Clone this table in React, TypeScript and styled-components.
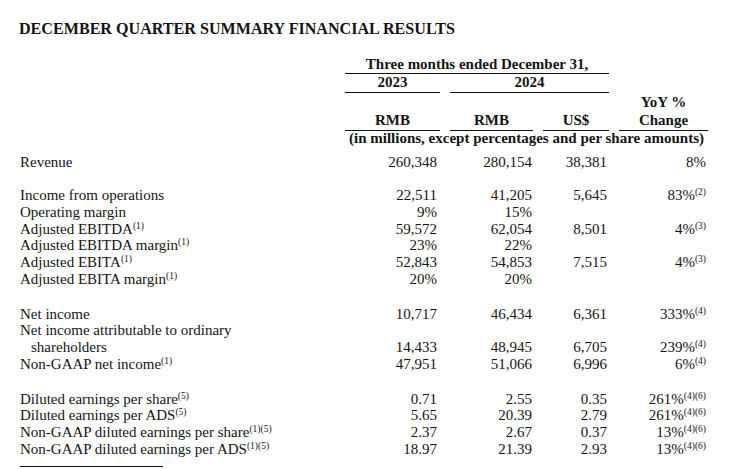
import React from "react";
import styled, { createGlobalStyle } from "styled-components";

const GlobalStyle = createGlobalStyle`
  body {
    margin: 0;
    background: #fff;
    color: #141414;
    font-family: "Liberation Serif", "Times New Roman", serif;
  }
`;

const Page = styled.div`
  padding: 19px 0 0 20px;
  width: 733px;
  height: 469px;
  box-sizing: border-box;
  overflow: hidden;
`;

const Title = styled.h1`
  margin: 0 0 17px -1px;
  font-size: 16.1px;
  line-height: 20px;
  font-weight: bold;
`;

const Row = styled.div<{ $header?: boolean }>`
  display: grid;
  grid-template-columns: 315px 95px 83px 66px 89px;
  column-gap: 10px;
  font-size: 15px;
  line-height: 16.67px;
  font-weight: ${({ $header }) => ($header ? "bold" : "normal")};
  align-items: end;
`;

const Head = styled.div<{ $span?: number; $start?: number; $rule?: boolean; $lh?: number; $pad?: number }>`
  grid-column: ${({ $start, $span }) => `${$start ?? 2} / span ${$span ?? 1}`};
  text-align: center;
  line-height: ${({ $lh }) => $lh ?? 17}px;
  padding-bottom: ${({ $pad }) => $pad ?? 0}px;
  border-bottom: ${({ $rule }) => ($rule ? "1px solid #111" : "none")};
  white-space: nowrap;
`;

const Label = styled.div<{ $indent?: boolean }>`
  padding-left: ${({ $indent }) => ($indent ? 11 : 0)}px;
  white-space: nowrap;
`;

const Value = styled.div<{ $pad: number }>`
  text-align: right;
  padding-right: ${({ $pad }) => $pad}px;
  white-space: nowrap;
`;

const Note = styled.sup`
  font-size: 9.5px;
  line-height: 0;
  vertical-align: 5px;
`;

const Spacer = styled.div<{ $h: number }>`
  height: ${({ $h }) => $h}px;
`;

const FootRule = styled.div`
  width: 143px;
  border-top: 1px solid #111;
  margin-top: 9px;
`;

type Line = {
  label: React.ReactNode;
  values?: React.ReactNode[];
  indent?: boolean;
};

const notes = (n: string) => <Note>{n}</Note>;
const pads = [3, 1, 2, 2];

const groups: Line[][] = [
  [{ label: "Revenue", values: ["260,348", "280,154", "38,381", "8%"] }],
  [
    { label: "Income from operations", values: ["22,511", "41,205", "5,645", <>83%{notes("(2)")}</>] },
    { label: "Operating margin", values: ["9%", "15%", "", ""] },
    { label: <>Adjusted EBITDA{notes("(1)")}</>, values: ["59,572", "62,054", "8,501", <>4%{notes("(3)")}</>] },
    { label: <>Adjusted EBITDA margin{notes("(1)")}</>, values: ["23%", "22%", "", ""] },
    { label: <>Adjusted EBITA{notes("(1)")}</>, values: ["52,843", "54,853", "7,515", <>4%{notes("(3)")}</>] },
    { label: <>Adjusted EBITA margin{notes("(1)")}</>, values: ["20%", "20%", "", ""] },
  ],
  [
    { label: "Net income", values: ["10,717", "46,434", "6,361", <>333%{notes("(4)")}</>] },
    { label: "Net income attributable to ordinary" },
    { label: "shareholders", indent: true, values: ["14,433", "48,945", "6,705", <>239%{notes("(4)")}</>] },
    { label: <>Non-GAAP net income{notes("(1)")}</>, values: ["47,951", "51,066", "6,996", <>6%{notes("(4)")}</>] },
  ],
  [
    { label: <>Diluted earnings per share{notes("(5)")}</>, values: ["0.71", "2.55", "0.35", <>261%{notes("(4)(6)")}</>] },
    { label: <>Diluted earnings per ADS{notes("(5)")}</>, values: ["5.65", "20.39", "2.79", <>261%{notes("(4)(6)")}</>] },
    { label: <>Non-GAAP diluted earnings per share{notes("(1)(5)")}</>, values: ["2.37", "2.67", "0.37", <>13%{notes("(4)(6)")}</>] },
    { label: <>Non-GAAP diluted earnings per ADS{notes("(1)(5)")}</>, values: ["18.97", "21.39", "2.93", <>13%{notes("(4)(6)")}</>] },
  ],
];

const gaps = [16.6, 18.4, 18.4];

export default function App() {
  return (
    <>
      <GlobalStyle />
      <Page>
        <Title>DECEMBER QUARTER SUMMARY FINANCIAL RESULTS</Title>

        <Row $header>
          <Head $span={3} $rule>Three months ended December 31,</Head>
        </Row>
        <Row $header>
          <Head $rule $pad={1}>2023</Head>
          <Head $start={3} $span={2} $rule $pad={1}>2024</Head>
        </Row>
        <Row $header>
          <Head $rule $lh={18} $pad={1}>RMB</Head>
          <Head $start={3} $rule $lh={18} $pad={1}>RMB</Head>
          <Head $start={4} $rule $lh={18} $pad={1}>US$</Head>
          <Head $start={5} $rule $lh={18} $pad={1}>
            YoY %
            <br />
            Change
          </Head>
        </Row>
        <Row $header>
          <Head $span={4} $lh={15}>(in millions, except percentages and per share amounts)</Head>
        </Row>
        <Spacer $h={8} />

        {groups.map((group, gi) => (
          <React.Fragment key={gi}>
            {gi > 0 && <Spacer $h={gaps[gi - 1]} />}
            {group.map((line, li) => (
              <Row key={li}>
                <Label $indent={line.indent}>{line.label}</Label>
                {line.values?.map((v, vi) => (
                  <Value key={vi} $pad={pads[vi]}>
                    {v}
                  </Value>
                ))}
              </Row>
            ))}
          </React.Fragment>
        ))}

        <FootRule />
      </Page>
    </>
  );
}
